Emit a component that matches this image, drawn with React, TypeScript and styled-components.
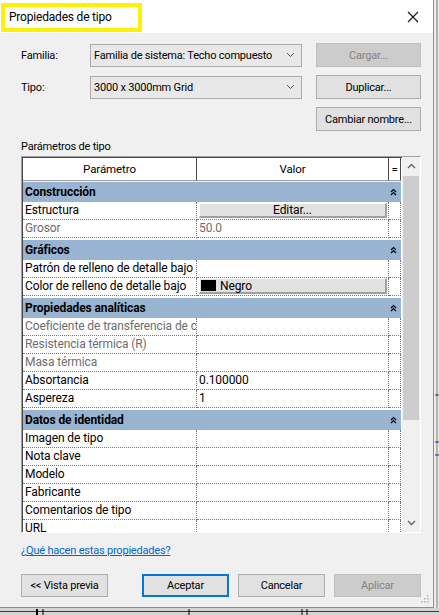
import React from "react";
import styled, { createGlobalStyle } from "styled-components";

const GlobalStyle = createGlobalStyle`
  html, body {
    margin: 0;
    padding: 0;
    background: #e6e6e6;
  }
  body {
    font-family: "Segoe UI", Roboto, sans-serif;
    font-size: 11px;
    letter-spacing: -0.2px;
    color: #000;
  }
`;

const Desktop = styled.div`
  position: relative;
  width: 439px;
  height: 615px;
  overflow: hidden;
  background: #ececec;
`;

const Backdrop = styled.svg`
  position: absolute;
  left: 0;
  top: 0;
`;

const Window = styled.div`
  position: relative;
  width: 434px;
  height: 608px;
  display: flex;
  flex-direction: column;
  background: #f0f0f0;
  border-right: 1px solid #8e8e8e;
  border-bottom: 1px solid #8e8e8e;
  box-sizing: border-box;
`;

const TitleBar = styled.div`
  height: 33px;
  flex: none;
  background: #fff;
  display: flex;
  align-items: center;
  justify-content: space-between;
  padding: 0 14px 0 1px;
`;

const TitleText = styled.div`
  border: 4px solid #fff200;
  height: 21px;
  width: 129px;
  margin-top: 1px;
  padding-left: 4px;
  display: flex;
  align-items: center;
  font-size: 12px;
`;

const Body = styled.div`
  flex: 1;
  display: flex;
  flex-direction: column;
  padding: 10px 12px 0 21px;
`;

const FormGrid = styled.div`
  display: grid;
  grid-template-columns: 55px 212px 105px;
  column-gap: 14px;
  grid-template-rows: 24px 24px 24px;
  row-gap: 8px;
  align-items: center;
  white-space: nowrap;
`;

const Label = styled.div`
  padding-left: 0;
`;

const Select = styled.div`
  height: 23px;
  box-sizing: border-box;
  border: 1px solid #acacac;
  background: #e8e8e8;
  display: flex;
  align-items: center;
  justify-content: space-between;
  padding: 0 6px 0 3px;
  overflow: hidden;
`;

const Button = styled.div<{ $disabled?: boolean; $default?: boolean }>`
  height: 24px;
  box-sizing: border-box;
  white-space: nowrap;
  border: ${(p) =>
    p.$default ? "2px solid #0078d7" : p.$disabled ? "1px solid #bfbfbf" : "1px solid #adadad"};
  background: ${(p) => (p.$disabled ? "#cccccc" : "#e1e1e1")};
  color: ${(p) => (p.$disabled ? "#838383" : "#000")};
  display: flex;
  align-items: center;
  justify-content: center;
`;

const SectionLabel = styled.div`
  margin-top: 7px;
  height: 17px;
  line-height: 17px;
`;

const TableFrame = styled.div`
  margin-top: 1px;
  width: 400px;
  height: 377px;
  box-sizing: border-box;
  border-top: 1px solid #a0a0a0;
  border-left: 1px solid #a0a0a0;
  border-right: 1px solid #fff;
  border-bottom: 1px solid #fff;
  display: flex;
  background: #fff;
`;

const GridArea = styled.div`
  flex: 1;
  display: flex;
  flex-direction: column;
  overflow: hidden;
  border-top: 1px solid #4a4a4a;
  border-left: 1px solid #4a4a4a;
  font-size: 12px;
  letter-spacing: -0.1px;
`;

const HeaderRow = styled.div`
  height: 23px;
  flex: none;
  display: grid;
  grid-template-columns: 174px 192px 12px;
  background: #fff;
  border-bottom: 1px solid #f0f0f0;
  font-size: 11.5px;
`;

const HeaderCell = styled.div`
  display: flex;
  align-items: center;
  justify-content: center;
  border-right: 1px solid #4a4a4a;
  border-bottom: 1px solid #a0a0a0;
`;

const GroupRow = styled.div<{ $first?: boolean }>`
  height: 20px;
  flex: none;
  margin-top: ${(p) => (p.$first ? "0" : "2px")};
  width: 378px;
  background: #99b4d1;
  display: flex;
  align-items: center;
  justify-content: space-between;
  font-weight: bold;
  padding: 0 4px 0 2px;
  box-sizing: border-box;
`;

const Row = styled.div<{ $muted?: boolean }>`
  height: 18px;
  flex: none;
  display: grid;
  grid-template-columns: 174px 192px 12px;
  color: ${(p) => (p.$muted ? "#6d6d6d" : "#000")};
`;

const Cell = styled.div`
  border-right: 1px dotted #777;
  border-bottom: 1px dotted #777;
  display: flex;
  align-items: center;
  padding: 0 0 1px 2px;
  white-space: nowrap;
  overflow: hidden;
  box-sizing: border-box;
`;

const CellButton = styled.div`
  flex: 1;
  height: 15px;
  margin-right: 1px;
  background: #e1e1e1;
  border-top: 1px solid #fff;
  border-left: 1px solid #fff;
  border-right: 2px solid #a0a0a0;
  border-bottom: 2px solid #a0a0a0;
  display: flex;
  align-items: center;
  justify-content: center;
  box-sizing: border-box;
`;

const ColorButton = styled(CellButton)`
  justify-content: flex-start;
  height: 16px;
  gap: 4px;
  padding-left: 1px;
`;

const Swatch = styled.span`
  width: 15px;
  height: 11px;
  background: #000;
`;

const ScrollBar = styled.div`
  width: 18px;
  flex: none;
  background: #f0f0f0;
  display: flex;
  flex-direction: column;
`;

const ScrollArrow = styled.div`
  height: 18px;
  display: flex;
  align-items: center;
  justify-content: center;
  flex: none;
`;

const Thumb = styled.div`
  height: 244px;
  margin: 1px 1px 0;
  background: #cdcdcd;
  flex: none;
`;

const ScrollSpacer = styled.div`
  flex: 1;
`;

const HelpLink = styled.a`
  margin-top: 11px;
  color: #0066cc;
  text-decoration: underline;
  width: max-content;
  cursor: pointer;
`;

const Footer = styled.div`
  margin-top: 17px;
  display: flex;
  gap: 9px;
  width: 400px;
`;

const FooterButton = styled(Button)<{ $spaced?: boolean }>`
  height: 23px;
  width: 87px;
  margin-left: ${(p) => (p.$spaced ? "25px" : "0")};
`;

const Grip = styled.svg`
  position: absolute;
  right: 4px;
  bottom: 4px;
`;

const Chevron = ({ up }: { up?: boolean }) => (
  <svg width="9" height="6" viewBox="0 0 9 6">
    <path
      d={up ? "M1 5 L4.5 1.5 L8 5" : "M1 1 L4.5 4.5 L8 1"}
      fill="none"
      stroke="#606060"
      strokeWidth="1.3"
    />
  </svg>
);

const DoubleUp = () => (
  <svg width="7" height="8" viewBox="0 0 7 8">
    <path d="M1 4 L3.5 1.5 L6 4 M1 7 L3.5 4.5 L6 7" fill="none" stroke="#000" strokeWidth="1.2" />
  </svg>
);

const SelectArrow = () => (
  <svg width="9" height="6" viewBox="0 0 9 6" style={{ flex: "none" }}>
    <path d="M1 1 L4.5 4.5 L8 1" fill="none" stroke="#555" strokeWidth="1" />
  </svg>
);

type Param = { name: string; value?: React.ReactNode; muted?: boolean };
type Group = { title: string; rows: Param[] };

const groups: Group[] = [
  {
    title: "Construcción",
    rows: [
      { name: "Estructura", value: <CellButton>Editar...</CellButton> },
      { name: "Grosor", value: "50.0", muted: true },
    ],
  },
  {
    title: "Gráficos",
    rows: [
      { name: "Patrón de relleno de detalle bajo" },
      {
        name: "Color de relleno de detalle bajo",
        value: (
          <ColorButton>
            <Swatch />
            Negro
          </ColorButton>
        ),
      },
    ],
  },
  {
    title: "Propiedades analíticas",
    rows: [
      { name: "Coeficiente de transferencia de calor (U)", muted: true },
      { name: "Resistencia térmica (R)", muted: true },
      { name: "Masa térmica", muted: true },
      { name: "Absortancia", value: "0.100000" },
      { name: "Aspereza", value: "1" },
    ],
  },
  {
    title: "Datos de identidad",
    rows: [
      { name: "Imagen de tipo" },
      { name: "Nota clave" },
      { name: "Modelo" },
      { name: "Fabricante" },
      { name: "Comentarios de tipo" },
      { name: "URL" },
    ],
  },
];

export default function App() {
  return (
    <>
      <GlobalStyle />
      <Desktop>
        <Backdrop width="439" height="615">
          <rect x="0" y="608" width="439" height="7" fill="#d4d4d4" />
          <line x1="0" y1="611.5" x2="439" y2="611.5" stroke="#3a3a3a" strokeWidth="1" />
          <line x1="37" y1="609" x2="37" y2="615" stroke="#000" strokeWidth="2" />
          <line x1="43" y1="609" x2="43" y2="615" stroke="#000" strokeWidth="1" />
          <line x1="189" y1="609" x2="189" y2="615" stroke="#000" strokeWidth="1" />
          <line x1="302" y1="609" x2="302" y2="615" stroke="#000" strokeWidth="1" />
          <line x1="307" y1="609" x2="307" y2="615" stroke="#000" strokeWidth="1" />
          <line x1="437" y1="0" x2="437" y2="608" stroke="#777" strokeWidth="1" />
          <line x1="435" y1="442" x2="439" y2="442" stroke="#2a2a80" strokeWidth="1" />
          <line x1="435" y1="455" x2="439" y2="455" stroke="#2a2a80" strokeWidth="1" />
          <line x1="435" y1="395" x2="439" y2="395" stroke="#333" strokeWidth="1" />
        </Backdrop>
        <Window>
          <TitleBar>
            <TitleText>Propiedades de tipo</TitleText>
            <svg width="12" height="12" viewBox="0 0 12 12">
              <path d="M1 1 L11 11 M11 1 L1 11" stroke="#111" strokeWidth="1.1" />
            </svg>
          </TitleBar>
          <Body>
            <FormGrid>
              <Label>Familia:</Label>
              <Select>
                <span>Familia de sistema: Techo compuesto</span>
                <SelectArrow />
              </Select>
              <Button $disabled>Cargar...</Button>
              <Label>Tipo:</Label>
              <Select>
                <span>3000 x 3000mm Grid</span>
                <SelectArrow />
              </Select>
              <Button>Duplicar...</Button>
              <span />
              <span />
              <Button>Cambiar nombre...</Button>
            </FormGrid>
            <SectionLabel>Parámetros de tipo</SectionLabel>
            <TableFrame>
              <GridArea>
                <HeaderRow>
                  <HeaderCell>Parámetro</HeaderCell>
                  <HeaderCell>Valor</HeaderCell>
                  <HeaderCell>=</HeaderCell>
                </HeaderRow>
                {groups.map((g, gi) => (
                  <React.Fragment key={g.title}>
                    <GroupRow $first={gi === 0}>
                      <span>{g.title}</span>
                      <DoubleUp />
                    </GroupRow>
                    {g.rows.map((r) => (
                      <Row key={r.name} $muted={r.muted}>
                        <Cell>{r.name}</Cell>
                        <Cell>{r.value}</Cell>
                        <Cell />
                      </Row>
                    ))}
                  </React.Fragment>
                ))}
              </GridArea>
              <ScrollBar>
                <ScrollArrow>
                  <Chevron up />
                </ScrollArrow>
                <Thumb />
                <ScrollSpacer />
                <ScrollArrow>
                  <Chevron />
                </ScrollArrow>
              </ScrollBar>
            </TableFrame>
            <HelpLink>¿Qué hacen estas propiedades?</HelpLink>
            <Footer>
              <FooterButton>&lt;&lt; Vista previa</FooterButton>
              <FooterButton $default $spaced>
                Aceptar
              </FooterButton>
              <FooterButton>Cancelar</FooterButton>
              <FooterButton $disabled>Aplicar</FooterButton>
            </Footer>
          </Body>
          <Grip width="8" height="8" viewBox="0 0 8 8">
            <rect x="6" y="0" width="1.5" height="1.5" fill="#b0b0b0" />
            <rect x="3" y="3" width="1.5" height="1.5" fill="#b0b0b0" />
            <rect x="6" y="3" width="1.5" height="1.5" fill="#b0b0b0" />
            <rect x="0" y="6" width="1.5" height="1.5" fill="#b0b0b0" />
            <rect x="3" y="6" width="1.5" height="1.5" fill="#b0b0b0" />
            <rect x="6" y="6" width="1.5" height="1.5" fill="#b0b0b0" />
          </Grip>
        </Window>
      </Desktop>
    </>
  );
}
